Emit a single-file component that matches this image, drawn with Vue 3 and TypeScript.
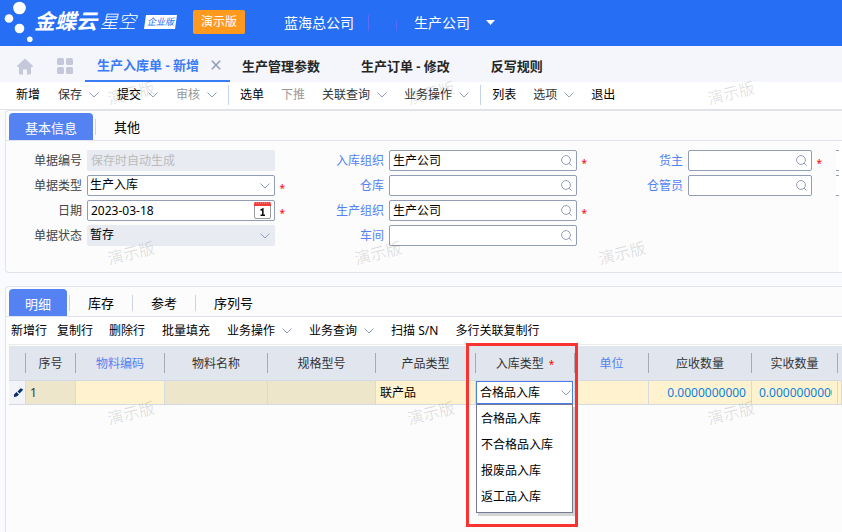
<script setup lang="ts">
import { ref } from 'vue'

interface Action {
  text: string
  menu?: boolean
  muted?: boolean
  soft?: boolean
}
interface Field {
  id: string
  label: string
  value: string
  kind: 'text' | 'select' | 'date' | 'lookup'
  hint?: string
  disabled?: boolean
  required?: boolean
}
interface Column {
  title: string
  key: string
  link?: boolean
  required?: boolean
}

const pages = ['生产管理参数', '生产订单 - 修改', '反写规则']

const actionGroups: Action[][] = [
  [
    { text: '新增' },
    { text: '保存', menu: true, soft: true },
    { text: '提交', menu: true },
    { text: '审核', menu: true, muted: true },
  ],
  [
    { text: '选单' },
    { text: '下推', muted: true },
    { text: '关联查询', menu: true, soft: true },
    { text: '业务操作', menu: true, soft: true },
  ],
  [{ text: '列表' }, { text: '选项', menu: true, soft: true }, { text: '退出' }],
]

const fieldColumns = ref<Field[][]>([
  [
    { id: 'number', label: '单据编号', value: '', hint: '保存时自动生成', kind: 'text', disabled: true },
    { id: 'type', label: '单据类型', value: '生产入库', kind: 'select', required: true },
    { id: 'date', label: '日期', value: '2023-03-18', kind: 'date', required: true },
    { id: 'status', label: '单据状态', value: '暂存', kind: 'select', disabled: true },
  ],
  [
    { id: 'stock-org', label: '入库组织', value: '生产公司', kind: 'lookup', required: true },
    { id: 'stock', label: '仓库', value: '', kind: 'lookup' },
    { id: 'prod-org', label: '生产组织', value: '生产公司', kind: 'lookup', required: true },
    { id: 'workshop', label: '车间', value: '', kind: 'lookup' },
  ],
  [
    { id: 'owner', label: '货主', value: '', kind: 'lookup', required: true },
    { id: 'keeper', label: '仓管员', value: '', kind: 'lookup' },
  ],
])

const rowActions: Action[][] = [
  [{ text: '新增行' }, { text: '复制行' }],
  [
    { text: '删除行' },
    { text: '批量填充' },
    { text: '业务操作', menu: true },
    { text: '业务查询', menu: true },
    { text: '扫描 S/N' },
    { text: '多行关联复制行' },
  ],
]

const columns: Column[] = [
  { title: '', key: 'mark' },
  { title: '序号', key: 'seq' },
  { title: '物料编码', key: 'code', link: true },
  { title: '物料名称', key: 'name' },
  { title: '规格型号', key: 'spec' },
  { title: '产品类型', key: 'kind' },
  { title: '入库类型', key: 'entry', required: true },
  { title: '单位', key: 'unit', link: true },
  { title: '应收数量', key: 'due' },
  { title: '实收数量', key: 'real' },
  { title: '', key: 'rest' },
]

const entryTypes = ['合格品入库', '不合格品入库', '报废品入库', '返工品入库']
const entryType = ref(entryTypes[0])

const marks = ['m1', 'm2', 'm3', 'm4', 'm5', 'm6', 'm7', 'm8', 'm9']
</script>

<template>
  <div class="app">
    <header class="top">
      <svg class="dots" viewBox="0 0 34 46" width="34" height="46" aria-hidden="true">
        <g fill="#fff">
          <circle cx="19.500" cy="8" r="6.300" />
          <circle cx="9" cy="18.500" r="4.300" />
          <circle cx="19.500" cy="28.500" r="4.800" />
          <circle cx="29.800" cy="39.300" r="2.800" />
        </g>
      </svg>
      <span class="brand">金蝶云</span>
      <span class="product">星空</span>
      <span class="edition">企业版</span>
      <span class="demo">演示版</span>
      <span class="company">蓝海总公司</span>
      <i class="tick"></i>
      <i class="tick short"></i>
      <button class="org" type="button">
        生产公司
        <svg width="9" height="5" viewBox="0 0 9 5" aria-hidden="true"><path d="M0 0h9L4.500 5z" fill="#fff" /></svg>
      </button>
    </header>

    <nav class="pages">
      <a class="home" href="#" aria-label="首页">
        <svg width="18" height="17" viewBox="0 0 18 17"><path d="M9 .5 1.200 7.800q-.8 1 .3 1.200H3v6.500q0 1 1 1h3V11.500h4v5h3q1 0 1-1V9h1.500q1.100-.2.300-1.200z" fill="#c5c8da" /></svg>
      </a>
      <a class="apps" href="#" aria-label="应用">
        <svg width="16" height="16" viewBox="0 0 16 16" fill="#c5c8da"><rect width="7" height="7" rx="1.500" /><rect x="9" width="7" height="7" rx="1.500" /><rect y="9" width="7" height="7" rx="1.500" /><rect x="9" y="9" width="7" height="7" rx="1.500" /></svg>
      </a>
      <div class="page current">
        <a href="#">生产入库单 - 新增</a>
        <button type="button" aria-label="关闭">
          <svg width="10" height="10" viewBox="0 0 10 10"><path d="M.8.8l8.400 8.400M9.200.8.800 9.200" stroke="#8d9ab5" stroke-width="1.500" /></svg>
        </button>
      </div>
      <a v-for="page in pages" :key="page" class="page" href="#">{{ page }}</a>
    </nav>

    <div class="actions">
      <div v-for="(group, g) in actionGroups" :key="g" class="group">
        <button v-for="action in group" :key="action.text" type="button" :class="{ muted: action.muted, soft: action.soft }">
          {{ action.text }}
          <svg v-if="action.menu" class="chevron" viewBox="0 0 10 6"><path d="M.5.5 5 5 9.500.5" /></svg>
        </button>
      </div>
    </div>

    <main>
      <section class="panel">
        <div class="tabs">
          <button class="active" type="button">基本信息</button>
          <button type="button">其他</button>
        </div>
        <div class="form">
          <div class="fields">
            <div v-for="(column, c) in fieldColumns" :key="c" class="column" :class="'column-' + (c + 1)">
              <div v-for="field in column" :key="field.id" class="field">
                <label :for="field.id" :class="{ link: field.kind === 'lookup' }">{{ field.label }}</label>
                <div class="control" :class="{ disabled: field.disabled }">
                  <select v-if="field.kind === 'select'" :id="field.id" v-model="field.value" :disabled="field.disabled">
                    <option>{{ field.value }}</option>
                  </select>
                  <input v-else :id="field.id" v-model="field.value" type="text" :placeholder="field.hint" :disabled="field.disabled" />
                  <svg v-if="field.kind === 'select'" class="chevron" viewBox="0 0 10 6"><path d="M.5.5 5 5 9.500.5" /></svg>
                  <svg v-if="field.kind === 'lookup'" class="lens" viewBox="0 0 11 11"><circle cx="5" cy="5" r="4.400" /><path d="M8 8.200l2.600 2.400" /></svg>
                  <svg v-if="field.kind === 'date'" class="calendar" viewBox="0 0 17 17">
                    <rect x=".5" y="1.500" width="16" height="15" rx="1.500" fill="#fff" stroke="#9a9a9a" />
                    <path d="M0 1.500Q0 0 1.500 0h14Q17 0 17 1.500V4H0z" fill="#f03c3c" />
                    <path d="M2 1h13" stroke="#fff" stroke-dasharray="1 1" opacity=".5" />
                    <path d="M6.500 8.200 8.800 7v6M6.500 13.200h4.500" fill="none" stroke="#111" stroke-width="1.600" />
                  </svg>
                </div>
                <span class="star">{{ field.required ? '*' : '' }}</span>
              </div>
            </div>
            <div class="column more"><i></i><i></i></div>
          </div>
          <div class="track"></div>
        </div>
      </section>

      <section class="panel detail">
        <div class="tabs">
          <button class="active" type="button">明细</button>
          <button type="button">库存</button>
          <button type="button">参考</button>
          <button type="button">序列号</button>
        </div>
        <div class="row-actions">
          <div v-for="(group, g) in rowActions" :key="g" class="row-group">
            <button v-for="action in group" :key="action.text" type="button">
              {{ action.text }}
              <svg v-if="action.menu" class="chevron" viewBox="0 0 10 6"><path d="M.5.5 5 5 9.500.5" /></svg>
            </button>
          </div>
        </div>
        <div class="grid">
          <table>
            <colgroup>
              <col v-for="column in columns" :key="column.key" :class="'w-' + column.key" />
            </colgroup>
            <thead>
              <tr>
                <th v-for="column in columns" :key="column.key" scope="col">
                  <div :class="{ link: column.link }">{{ column.title }}<span v-if="column.required" class="need">*</span></div>
                </th>
              </tr>
            </thead>
            <tbody>
              <tr>
                <td class="mark">
                  <svg width="9" height="9" viewBox="0 0 9 9"><path d="M0 9V6.500L2.500 4 5 6.500 2.800 8.500zM3.500 3.500 6.500 .6Q7.500 0 8.500 1T8.400 2.600L5.600 5.500z" fill="#0b2f6b" /></svg>
                </td>
                <td class="locked">1</td>
                <td></td>
                <td class="locked"></td>
                <td class="locked"></td>
                <td class="kind">联产品</td>
                <td class="editing">
                  <div class="picker">
                    <select v-model="entryType" aria-label="入库类型">
                      <option v-for="option in entryTypes" :key="option">{{ option }}</option>
                    </select>
                    <svg class="chevron" viewBox="0 0 10 6"><path d="M.5.5 5 5 9.500.5" /></svg>
                    <ul class="menu" role="listbox" aria-label="入库类型">
                      <li v-for="option in entryTypes" :key="option" role="option" :aria-selected="option === entryType" @click="entryType = option">{{ option }}</li>
                    </ul>
                  </div>
                </td>
                <td></td>
                <td class="number">0.0000000000</td>
                <td class="number clipped"><div>0.0000000000</div></td>
                <td></td>
              </tr>
            </tbody>
          </table>
          <div class="highlight"></div>
        </div>
      </section>
    </main>

    <div class="watermarks" aria-hidden="true">
      <span v-for="mark in marks" :key="mark" :class="mark">演示版</span>
    </div>
  </div>
</template>

<style>
body {
  background: #fafbfe;
}
</style>

<style scoped>
.app {
  position: relative;
  min-height: 100vh;
  display: flex;
  flex-direction: column;
  overflow: hidden;
  font: 12px/18px "Noto Sans", "Noto Sans CJK SC", sans-serif;
  color: #000;
}
*,
*::before,
*::after {
  box-sizing: border-box;
}
button,
input,
select {
  margin: 0;
  padding: 0;
  border: 0;
  border-radius: 0;
  background: none;
  font: inherit;
  color: inherit;
  appearance: none;
  outline: 0;
}
button {
  white-space: nowrap;
}
a {
  color: inherit;
  text-decoration: none;
}
svg {
  display: block;
  flex: none;
}
.chevron {
  width: 10px;
  height: 6px;
  fill: none;
  stroke: #8e9fc4;
  overflow: visible;
}
.link {
  color: #5582f3;
}

.top {
  display: flex;
  align-items: center;
  height: 46px;
  background: #266ff5;
  color: #fff;
  white-space: nowrap;
}
.brand {
  font-size: 21px;
  line-height: 30px;
  font-weight: 700;
  font-style: italic;
  margin-bottom: 4px;
}
.product {
  margin: 0 8px 4px 3px;
  font-size: 18px;
  line-height: 30px;
  font-style: italic;
  font-weight: 300;
}
.edition {
  width: 33px;
  margin-bottom: 2px;
  background: #fff;
  clip-path: polygon(2px 0, 100% 0, calc(100% - 2px) 100%, 0 100%);
  color: #266ff5;
  font-size: 9px;
  line-height: 14px;
  font-style: italic;
  text-align: center;
}
.demo {
  margin: 0 39px 2px 16px;
  padding: 0 8px;
  border-radius: 2px;
  background: #ff9a1e;
  line-height: 24px;
}
.company {
  font-size: 14px;
}
.tick {
  width: 1px;
  height: 16px;
  margin-left: 14px;
  background: #5a6cf8;
}
.tick.short {
  height: 10px;
  margin: 5px 17px 0 27px;
}
.org {
  display: flex;
  align-items: center;
  gap: 16px;
  font-size: 14px;
}
.org svg {
  margin-bottom: 2px;
}

.pages {
  display: flex;
  align-items: center;
  height: 36px;
  background: #f5f6fb;
  font-size: 13px;
  font-weight: 700;
  color: #262626;
  white-space: nowrap;
}
.home {
  margin: 4px 23px 0 16px;
}
.apps {
  margin: 4px 12px 0 0;
}
.page {
  height: 36px;
  padding-top: 4px;
  line-height: 32px;
  margin-right: 41px;
}
.current {
  display: flex;
  align-items: center;
  gap: 12px;
  margin-right: 12px;
  padding: 4px 9px 0 12px;
  border-bottom: 2px solid #3a7bf6;
  color: #3a7bf6;
}

.actions {
  display: flex;
  height: 28px;
  padding: 0 0 2px 16px;
  background: #fff;
  border-bottom: 1px solid #e2e2e6;
}
.group {
  display: flex;
  align-items: center;
  gap: 17px;
}
.group:first-child {
  gap: 18px;
}
.group + .group::before {
  content: "";
  width: 1px;
  height: 20px;
  margin: 0 -6px 0 11px;
  background: #c3d3ee;
}
.group button,
.row-group button {
  display: flex;
  align-items: center;
  gap: 7px;
}
.soft {
  color: #333;
}
.muted {
  color: #999;
}

main {
  flex: 1;
  display: flex;
  flex-direction: column;
  gap: 13px;
  padding-left: 5px;
}
.panel {
  border: solid #dfe3ec;
  border-width: 1px 0 1px 1px;
  border-radius: 4px 0 0 4px;
  background: #fcfcfc;
}
.detail {
  flex: 1;
  border-bottom: 0;
  border-bottom-left-radius: 0;
}
.tabs {
  display: flex;
  align-items: center;
  height: 30px;
  padding: 2px 0 0 3px;
  border-bottom: 1px solid #dfe3ec;
  font-size: 13px;
}
.tabs button {
  height: 27px;
  padding: 1px 18px 0 19px;
}
.tabs .active {
  padding: 2px 16px 0;
  margin-right: 2px;
  border-radius: 4px 4px 0 0;
  background: #5582f3;
  color: #fff;
}
.tabs button + button::before {
  content: "";
  float: left;
  width: 1px;
  height: 16px;
  margin: 1px 0 0 -19px;
  background: #ccd3e2;
}

.form {
  display: flex;
  height: 131px;
}
.fields {
  flex: 1;
  display: flex;
  min-width: 0;
  padding-top: 9px;
  overflow: hidden;
}
.track {
  width: 3px;
  background: #fff;
}
.column {
  flex: none;
  display: flex;
  flex-direction: column;
  gap: 4px;
}
.column-1 {
  width: 280px;
}
.column-2 {
  width: 302px;
}
.column-3 {
  width: 235px;
}
.field {
  display: flex;
  align-items: center;
}
.field label {
  flex: 1;
  padding-right: 5px;
  text-align: right;
  color: #444;
}
.field label.link {
  color: #5582f3;
}
.control {
  position: relative;
  display: flex;
  align-items: center;
  width: 188px;
  height: 21px;
  border: 1px solid #929db8;
  border-radius: 2px;
  background: #fff;
}
.column-3 .control {
  width: 124px;
}
.control.disabled {
  border-color: #e8ebf1;
  background: #e8ebf1;
}
.control input,
.control select {
  flex: 1;
  min-width: 0;
  height: 19px;
  padding: 0 0 1px 3px;
  opacity: 1;
}
.control select {
  padding-left: 2px;
}
.control input::placeholder {
  color: #bbb;
  opacity: 1;
}
.control .chevron {
  margin: 0 4px;
}
.lens {
  width: 11px;
  height: 11px;
  margin-right: 4px;
  fill: none;
  stroke: #929db8;
}
.calendar {
  width: 17px;
  height: 17px;
  margin-right: 3px;
}
.star,
.need {
  font-size: 10px;
  color: #f00;
}
.star {
  width: 11px;
  padding: 5px 1px 0 0;
  line-height: 14px;
  text-align: right;
}
.more {
  flex: 1;
  padding-left: 13px;
}
.more i {
  height: 21px;
  border: solid #929db8;
  border-width: 1px 0;
  background: #fff;
}

.row-actions {
  display: flex;
  gap: 16px;
  height: 28px;
  margin-left: 3px;
  padding-left: 2px;
  border-bottom: 1px solid #ececec;
  background: #fff;
}
.row-group {
  display: flex;
  align-items: center;
  gap: 17px;
}
.row-group:first-child {
  gap: 10px;
}

.grid {
  position: relative;
  margin: 1px 0 0 3px;
}
table {
  width: 100%;
  table-layout: fixed;
  border-collapse: separate;
  border-spacing: 0;
}
.w-mark { width: 17px; }
.w-seq { width: 50px; }
.w-code { width: 89px; }
.w-name { width: 103px; }
.w-spec { width: 108px; }
.w-kind { width: 100px; }
.w-entry { width: 99px; }
.w-unit { width: 74px; }
.w-due { width: 103px; }
.w-real { width: 86px; }
th {
  height: 35px;
  padding: 0;
  border-bottom: 1px solid #d5d9e4;
  background: #e1e5ee;
  font-weight: 400;
  color: #333;
}
th div {
  height: 20px;
  padding-top: 1px;
  border-right: 1px solid #a6abb8;
  line-height: 20px;
  white-space: nowrap;
}
th:last-child div {
  border: 0;
}
th div.link {
  color: #5582f3;
}
.need {
  margin-left: 5px;
}
td {
  height: 24px;
  padding: 0 4px;
  border: solid #d5d9e0;
  border-width: 0 1px 1px 0;
  background: #fff2ce;
  white-space: nowrap;
  color: #333;
}
td.locked {
  background: #eee6cb;
}
td.mark {
  padding: 0 0 0 5px;
  background: #f2f4f9;
}
td.kind {
  color: #000;
}
td.number {
  padding-right: 5px;
  text-align: right;
  color: #0a7fe0;
}
td.clipped {
  padding: 0 5px 0 7px;
  text-align: left;
}
td.clipped div {
  overflow: hidden;
}
td.editing {
  padding: 0;
  color: #000;
}
.picker {
  position: relative;
  display: flex;
  align-items: center;
  height: 23px;
  margin-right: 1px;
  border: 1px solid #4a7df0;
  background: #fff;
}
.picker select {
  flex: 1;
  min-width: 0;
  height: 21px;
  padding-left: 3px;
}
.picker .chevron {
  margin-right: 1px;
}
.menu {
  position: absolute;
  z-index: 2;
  top: 22px;
  left: -1px;
  right: -1px;
  margin: 0;
  padding: 1px 0 2px;
  border: 1px solid #747a92;
  background: #fff;
  box-shadow: 2px 3px 0 #d2d4d6;
  list-style: none;
}
.menu li {
  padding-left: 4px;
  line-height: 26px;
}
.highlight {
  position: absolute;
  z-index: 3;
  top: -3px;
  left: 457px;
  width: 112px;
  height: 184px;
  border: 3px solid #f93232;
  pointer-events: none;
}

.watermarks {
  position: absolute;
  inset: 0;
  overflow: hidden;
  pointer-events: none;
}
.watermarks span {
  position: absolute;
  width: 48px;
  font-size: 16px;
  line-height: 20px;
  color: rgba(0, 0, 0, 0.12);
  white-space: nowrap;
  transform: rotate(-14deg);
}
.m1, .m4, .m7 { left: 107px; }
.m2, .m8 { left: 407px; }
.m3, .m9 { left: 707px; }
.m5 { left: 354px; }
.m6 { left: 598px; }
.m1, .m2, .m3 { top: 83px; }
.m4, .m5, .m6 { top: 243px; }
.m7, .m8, .m9 { top: 403px; }
</style>
